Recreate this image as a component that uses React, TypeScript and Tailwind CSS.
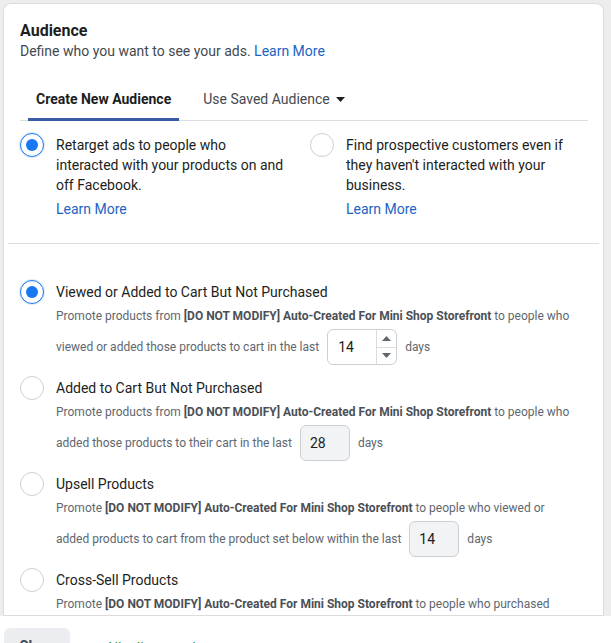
import type { ReactNode } from "react";

type Option = {
  title: string;
  lead: string;
  tail: string;
  line2: string;
  value: string;
  active?: boolean;
  spinner?: boolean;
};

const BOLD = "[DO NOT MODIFY] Auto-Created For Mini Shop Storefront";

const options: Option[] = [
  {
    title: "Viewed or Added to Cart But Not Purchased",
    lead: "Promote products from ",
    tail: " to people who",
    line2: "viewed or added those products to cart in the last",
    value: "14",
    active: true,
    spinner: true,
  },
  {
    title: "Added to Cart But Not Purchased",
    lead: "Promote products from ",
    tail: " to people who",
    line2: "added those products to their cart in the last",
    value: "28",
  },
  {
    title: "Upsell Products",
    lead: "Promote ",
    tail: " to people who viewed or",
    line2: "added products to cart from the product set below within the last",
    value: "14",
  },
  {
    title: "Cross-Sell Products",
    lead: "Promote ",
    tail: " to people who purchased",
    line2: "products from the product set below within the last",
    value: "14",
  },
];

function Radio({ checked }: { checked?: boolean }) {
  if (checked) {
    return (
      <span className="flex h-6 w-6 shrink-0 items-center justify-center rounded-full border-[1.5px] border-[#1877f2] bg-white shadow-[0_0_0_1px_rgba(24,119,242,0.15)]">
        <span className="h-3 w-3 rounded-full bg-[#1877f2]" />
      </span>
    );
  }
  return <span className="h-6 w-6 shrink-0 rounded-full border border-[#ccd0d5] bg-white" />;
}

function DaysInput({ value, spinner }: { value: string; spinner?: boolean }) {
  if (spinner) {
    return (
      <span className="mx-2 flex h-9 w-[70px] items-stretch rounded-md border border-[#ccd0d5] bg-white">
        <span className="flex flex-1 items-center pl-[10px] text-[14px] text-[#1c1e21]">{value}</span>
        <span className="flex w-[20px] flex-col border-l border-[#dadde1]">
          <span className="flex flex-1 items-center justify-center border-b border-[#dadde1]">
            <svg width="9" height="5" viewBox="0 0 9 5">
              <path d="M0 5 L4.5 0 L9 5 Z" fill="#606770" />
            </svg>
          </span>
          <span className="flex flex-1 items-center justify-center">
            <svg width="9" height="5" viewBox="0 0 9 5">
              <path d="M0 0 L4.5 5 L9 0 Z" fill="#606770" />
            </svg>
          </span>
        </span>
      </span>
    );
  }
  return (
    <span className="mx-2 flex h-9 w-[50px] items-center rounded-md border border-[#ccd0d5] bg-[#f2f3f5] pl-[9px] text-[14px] text-[#1c1e21]">
      {value}
    </span>
  );
}

function Choice({ checked, children }: { checked?: boolean; children: ReactNode }) {
  return (
    <div className="flex items-start gap-3">
      <Radio checked={checked} />
      <div className="mt-[2px] w-[232px] text-[14px] leading-[20px] text-[#1c1e21]">
        {children}
        <div className="mt-1 text-[#1b64c4]">Learn More</div>
      </div>
    </div>
  );
}

export default function App() {
  return (
    <div className="flex h-[643px] w-[611px] flex-col overflow-hidden bg-[#ededed] font-['Roboto',sans-serif]">
      <div className="ml-[3px] mr-[7px] mt-[3px] h-[613px] shrink-0 overflow-hidden rounded-t-lg border border-[#dcdcdc] bg-white">
        <div className="pl-[16px] pr-[15px] pt-[17px]">
          <h2 className="text-[16px] font-bold leading-[20px] text-[#1c1e21]">Audience</h2>
          <p className="text-[14px] leading-[20px] text-[#444950]">
            Define who you want to see your ads. <span className="text-[#1b64c4]">Learn More</span>
          </p>

          <div className="mt-[18px] flex h-[42px] border-b border-[#dadde1]">
            <div className="relative ml-2 flex items-center px-2 text-[14px] font-bold text-[#1c1e21]">
              Create New Audience
              <span className="absolute inset-x-0 -bottom-px h-[3px] bg-[#3b5ca2]" />
            </div>
            <div className="ml-4 flex items-center gap-[6px] px-2 text-[14px] text-[#444950]">
              Use Saved Audience
              <svg width="9" height="5" viewBox="0 0 9 5">
                <path d="M0 0 L4.5 5 L9 0 Z" fill="#1c1e21" />
              </svg>
            </div>
          </div>

          <div className="mt-[12px] grid grid-cols-2 gap-x-3">
            <Choice checked>Retarget ads to people who interacted with your products on and off Facebook.</Choice>
            <Choice>Find prospective customers even if they haven't interacted with your business.</Choice>
          </div>
        </div>

        <div className="mx-1 mt-[24px] border-t border-[#dadde1]" />

        <div className="flex flex-col gap-[11px] pl-[16px] pr-[15px] pt-[36px]">
          {options.map((o) => (
            <div key={o.title} className="flex items-start gap-3">
              <Radio checked={o.active} />
              <div className="mt-[2px] flex-1">
                <div className="text-[14px] leading-[20px] text-[#1c1e21]">{o.title}</div>
                <p className="mt-[4px] whitespace-nowrap text-[12px] leading-[20px] text-[#606770]">
                  {o.lead}
                  <span className="font-bold text-[#4b4f56]">{BOLD}</span>
                  {o.tail}
                </p>
                <div className="mt-[3px] flex h-9 items-center text-[12px] text-[#606770]">
                  {o.line2}
                  <DaysInput value={o.value} spinner={o.spinner} />
                  days
                </div>
              </div>
            </div>
          ))}
        </div>
      </div>

      <div className="flex flex-1 items-start gap-5 bg-white pl-[4px] pt-[12px]">
        <span className="flex h-9 w-[66px] items-center justify-center rounded-md bg-[#ebedf0] text-[14px] font-bold text-[#444950]">
          Close
        </span>
        <span className="mt-[10px] text-[14px] text-[#3c8a2e]">✓ All edits saved</span>
      </div>
    </div>
  );
}
